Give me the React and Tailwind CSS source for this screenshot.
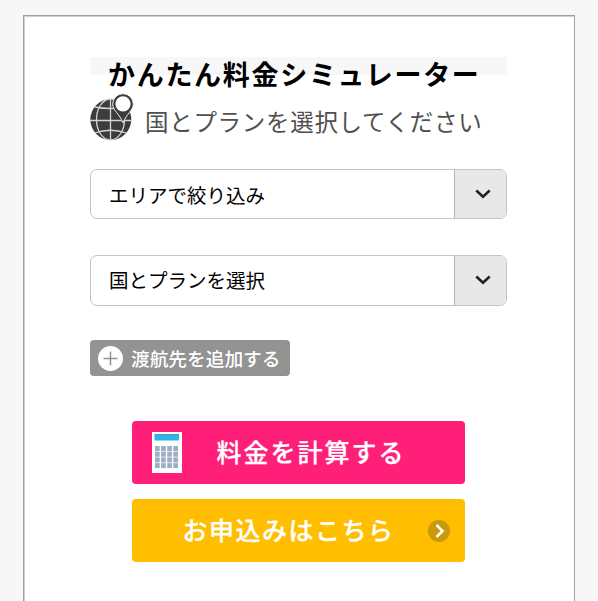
import { useState } from 'react';

const AREA_OPTIONS = ['エリアで絞り込み'];
const PLAN_OPTIONS = ['国とプランを選択'];

function GlobeIcon() {
  return (
    <svg className="block h-[46px] w-[44px] shrink-0 overflow-visible" viewBox="0 0 44 46" fill="none">
      <circle cx="20.8" cy="25.5" r="20.5" fill="#3c3c3c" />
      <g stroke="#d4d4d4" strokeWidth="1.3">
        <path d="M20.5 5v41M0 26.5h41" />
        <ellipse cx="20.5" cy="25.5" rx="14" ry="20.5" />
        <path d="M4.5 13q16 3 32 0M4.5 39q16-5.5 32 0" />
      </g>
      {/* Map pin */}
      <path
        d="M33-.3a10.300 10.300 0 0 1 10.300 10.300c0 6.500-6.700 9.500-10.300 18.900-3.600-9.400-10.300-12.400-10.300-18.900a10.300 10.300 0 0 1 10.300-10.300z"
        fill="#3c3c3c"
        stroke="#f0f0f0"
        strokeWidth="1"
      />
      <circle cx="33" cy="9.8" r="7.6" fill="#fff" />
    </svg>
  );
}

function CalculatorIcon() {
  return (
    <svg className="block h-[41px] w-[30px] shrink-0" viewBox="0 0 30 41">
      <rect width="30" height="41" fill="#fff" />
      <rect x="2.5" y="2" width="24.5" height="6.5" fill="#2fb4ea" />
      <rect x="2.5" y="2" width="24.5" height="1.2" fill="#4d9cc0" />
      {[0, 1, 2, 3].map((row) =>
        [0, 1, 2, 3].map((col) => (
          <rect
            key={`${row}-${col}`}
            x={3 + col * 6.1}
            y={14 + row * 5.7}
            width="4.7"
            height="5"
            fill="#9dadc3"
          />
        ))
      )}
    </svg>
  );
}

function SelectBox({ options, className, labelClassName }) {
  const [selected] = useState(options[0]);

  return (
    <button
      type="button"
      className={`flex w-[417px] overflow-hidden rounded-[7px] border border-[#c4c4c4] bg-white text-left ${className}`}
    >
      <span
        className={`flex h-full flex-1 items-center pl-[17.5px] text-[19.5px] leading-none text-black ${labelClassName}`}
      >
        {selected}
      </span>
      <span className="flex h-full w-[52.5px] items-center justify-center border-l border-[#b8b8b8] bg-[#e8e8e8] pl-1">
        <svg className="-mt-px h-[10px] w-[16px]" viewBox="0 0 16 10" fill="none">
          <path d="M1.3 1.5L8 7.8l6.7-6.3" stroke="#222" strokeWidth="2.6" />
        </svg>
      </span>
    </button>
  );
}

export default function App() {
  return (
    <div className="h-[601px] overflow-hidden bg-[#f7f7f7] pt-[15px] pl-[23px] font-['Noto_Sans_CJK_JP',sans-serif]">
      <div className="h-[620px] w-[552px] border border-[#a0a0a0] bg-white pt-[41px] pl-[66.4px] shadow-[inset_1px_1px_0_#d0d0d0]">
        {/* Heading */}
        <h2 className="h-[18px] w-[417px] bg-[#f7f7f7] pl-[17.6px] text-[27px] leading-[34px] font-bold tracking-[1.7px] whitespace-nowrap text-black">
          かんたん料金シミュレーター
        </h2>
        <div className="mt-[19px] flex h-[46px] items-center">
          <GlobeIcon />
          <p className="mt-[9px] ml-[10.6px] text-[23.5px] leading-none tracking-[0.7px] whitespace-nowrap text-[#505050]">
            国とプランを選択してください
          </p>
        </div>

        {/* Filters */}
        <SelectBox options={AREA_OPTIONS} className="mt-[29px] h-[50px]" labelClassName="pt-[2px]" />
        <SelectBox options={PLAN_OPTIONS} className="mt-[36px] h-[51px]" labelClassName="pb-px" />

        <button
          type="button"
          className="mt-[34.4px] flex h-[36px] w-[200px] items-center rounded-[4px] bg-[#939393] pl-[7.6px] text-white"
        >
          <svg className="h-[25px] w-[25px] shrink-0" viewBox="0 0 25 25">
            <circle cx="12.5" cy="12.5" r="12.5" fill="#fff" />
            <path d="M12.5 5.5v14M5.5 12.5h14" stroke="#939393" strokeWidth="1.5" />
          </svg>
          <span className="ml-[8px] text-[18.7px] leading-none font-medium whitespace-nowrap">渡航先を追加する</span>
        </button>

        {/* Actions */}
        <div className="mt-[45px] ml-[42px] flex w-[333px] flex-col gap-[15px]">
          <button
            type="button"
            className="flex h-[63px] items-center rounded-[4px] bg-[#ff1f78] pl-[20px] text-white"
          >
            <CalculatorIcon />
            <span className="mb-[2px] ml-[34px] text-[25px] leading-none font-medium tracking-[2px] whitespace-nowrap [-webkit-text-stroke:0.25px_white]">
              料金を計算する
            </span>
          </button>
          <button
            type="button"
            className="flex h-[63px] items-center rounded-[4px] bg-[#ffbf00] pl-[50px] text-white"
          >
            <span className="mb-[2px] text-[25px] leading-none font-medium tracking-[1.5px] whitespace-nowrap [-webkit-text-stroke:0.25px_white]">
              お申込みはこちら
            </span>
            <svg className="ml-[34px] h-[22px] w-[22px] shrink-0" viewBox="0 0 22 22" fill="none">
              <circle cx="11" cy="11" r="11" fill="#c99a0b" />
              <path d="M8.5 5l6 6-6 6" stroke="#fff" strokeWidth="2.5" />
            </svg>
          </button>
        </div>
      </div>
    </div>
  );
}
